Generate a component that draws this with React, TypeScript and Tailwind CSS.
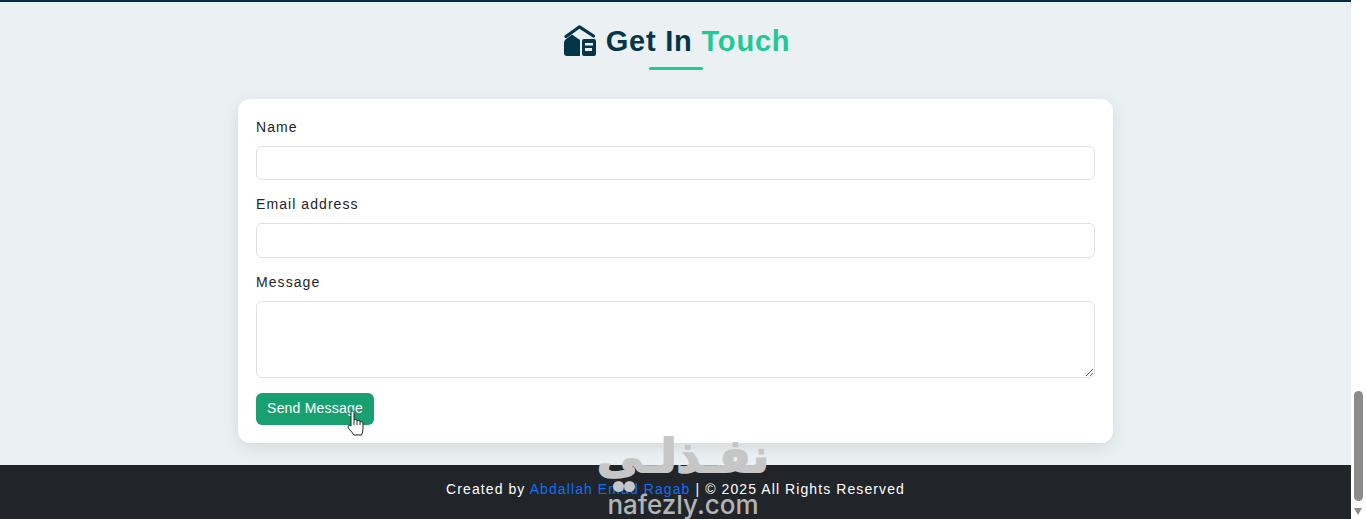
function Field({ label, children }: { label: string; children: React.ReactNode }) {
  return (
    <div>
      <label className="block mb-2 text-[14px] leading-[21px] tracking-[1.07px] text-[#212529]">{label}</label>
      {children}
    </div>
  );
}

function HouseIcon() {
  return (
    <svg viewBox="0 0 32 32" className="w-[32px] h-[32px] text-[#033649]" fill="currentColor">
      <path d="M2 11.5 L15.5 1.8 L29.5 11" fill="none" stroke="currentColor" strokeWidth="3.2" strokeLinecap="round" strokeLinejoin="round" />
      <path d="M0 17.5 Q0 15.5 2 14 L8 9.5 L16 15 V31 H3 Q0 31 0 28 Z" />
      <path
        fillRule="evenodd"
        d="M20 14 H30 Q32 14 32 16 V29 Q32 31 30 31 H20 Q18 31 18 29 V16 Q18 14 20 14 Z M21 18 V20.5 H29 V18 Z M21 23 V26 H28 V23 Z"
      />
    </svg>
  );
}

function HandCursor() {
  return (
    <svg viewBox="0 0 17 26" className="absolute left-[347px] top-[410px] w-[17px] h-[26px]">
      <path
        d="M4 2.5 Q4 1 5.5 1 Q7 1 7 2.5 V10 Q8.5 8.8 10 10 V11 Q11.5 9.8 13 11 V12 Q14.5 11 16 12.5 V19 Q16 22 14.5 25 H7 Q5 22 1.5 18.5 Q0.5 17 1.5 15.5 Q3 14.8 4 16 Z"
        fill="white"
        stroke="#222"
        strokeWidth="1"
        strokeLinejoin="round"
      />
      <path d="M7 10 V15 M10 11 V15 M13 12 V15" stroke="#222" strokeWidth="0.9" fill="none" />
    </svg>
  );
}

export default function App() {
  const inputClass = "block w-full mb-[14px] rounded-md border border-[#dee2e6] bg-white";

  return (
    <div className="relative h-[519px] w-[1366px] overflow-hidden flex bg-white font-['Liberation_Sans',Arial,sans-serif]">
      <div className="w-[1351px] flex flex-col">
        <section className="h-[465px] bg-[#ebf0f2] border-t-2 border-[#012f3f] flex flex-col items-center">
          <h2 className="mt-[21px] ml-[3px] flex items-center gap-[10px] text-[29px] leading-[36px] font-bold tracking-[0.8px] text-[#033649]">
            <HouseIcon />
            <span>
              Get In <span className="text-[#20c997]">Touch</span>
            </span>
          </h2>
          <div className="mt-[8px] w-[54px] h-[3px] rounded bg-[#20c997]" />
          <form className="mt-[29px] w-[875px] h-[344px] rounded-xl bg-white p-[18px] shadow-[0_4px_16px_rgba(0,0,0,0.1)]">
            <Field label="Name">
              <input className={`${inputClass} h-[34px]`} />
            </Field>
            <Field label="Email address">
              <input className={`${inputClass} h-[35px]`} />
            </Field>
            <Field label="Message">
              <textarea className="block w-full h-[77px] mb-[15px] rounded-md border border-[#dee2e6] bg-white" />
            </Field>
            <button type="button" className="w-[118px] h-[32px] pb-[2px] rounded-md bg-[#18a070] text-white text-[14px] tracking-[0.2px]">
              Send Message
            </button>
          </form>
        </section>
        <footer className="h-[54px] bg-[#212529] text-white text-[14px] tracking-[1.09px] flex justify-center pt-[14px]">
          <p>
            Created by <a className="text-[#0d6efd]">Abdallah Emad Ragab</a> | © 2025 All Rights Reserved
          </p>
        </footer>
      </div>
      <div className="w-[15px] relative bg-white">
        <div className="absolute left-[3px] top-[391px] w-[9px] h-[110px] rounded-full bg-[#8b8b8b]" />
        <div className="absolute left-[3px] bottom-[4px] w-0 h-0 border-l-[4.5px] border-r-[4.5px] border-t-[7px] border-l-transparent border-r-transparent border-t-[#8b8b8b]" />
      </div>
      <HandCursor />
      <div className="absolute left-[597px] top-[421px] w-[172px] flex flex-col items-center pointer-events-none">
        <span dir="rtl" className="text-[46px] leading-[70px] font-bold whitespace-nowrap text-[#c6c6c6] [-webkit-text-stroke:2px_#c6c6c6] font-['DejaVu_Sans',sans-serif]">
          نفـذلـى
        </span>
        <span className="text-[26px] leading-[28px] font-medium text-[#b4b4b4] font-['Inter',sans-serif]">nafezly.com</span>
      </div>
      <div className="absolute left-[613px] top-[481px] flex gap-0 pointer-events-none">
        <div className="w-[11px] h-[11px] rounded-full bg-[#c4c6cc]" />
        <div className="w-[11px] h-[11px] rounded-full bg-[#c4c6cc]" />
      </div>
    </div>
  );
}
